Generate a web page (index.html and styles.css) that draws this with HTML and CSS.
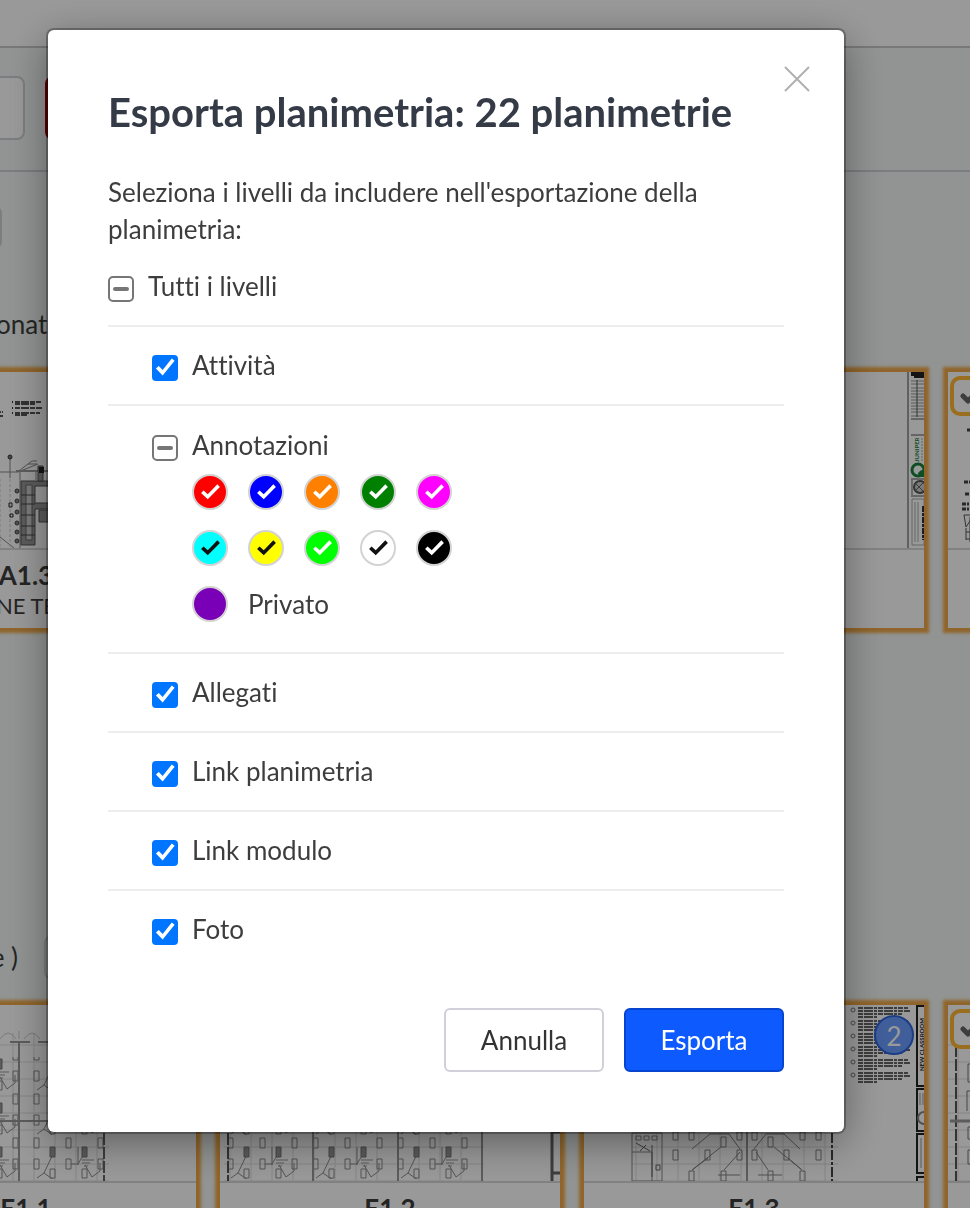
FILE: index.html
```html
<!DOCTYPE html>
<html lang="it">
<head>
<meta charset="utf-8">
<meta name="viewport" content="width=device-width, initial-scale=1">
<title>Esporta planimetria</title>
<link rel="stylesheet" href="styles.css">
</head>
<body>
<svg class="defs" width="0" height="0" aria-hidden="true">
  <defs>
    <pattern id="grid" width="21" height="17" patternUnits="userSpaceOnUse">
      <path d="M0 6H21M10 0V17" stroke="#dedede" stroke-width="1" fill="none"/>
    </pattern>
    <pattern id="lights" x="4" y="86" width="85" height="44" patternUnits="userSpaceOnUse">
      <g fill="none" stroke="#8c8c8c" stroke-width="1">
        <path d="M4 3h5v10h-5zM36 3h5v10h-5zM68 3h5v10h-5zM4 24h5v10h-5zM20 34h5v9h-5zM36 24h5v10h-5zM52 34h5v9h-5zM68 24h5v10h-5z"/>
        <path d="M7 43L14 38L24 17H20M14 38L28 48M41 29H48L57 14M55 30L62 42L70 36V28M48 12V30"/>
      </g>
      <path d="M20 12h5v10h-5zM52 12h5v10h-5z" fill="#999" stroke="#777"/>
      <path d="M52 25h12M52 28h8M54 31h4" stroke="#999"/>
    </pattern>
    <pattern id="notes" x="266" y="2" width="62" height="13" patternUnits="userSpaceOnUse">
      <circle cx="3" cy="3" r="2" fill="none" stroke="#777"/>
      <path d="M8 1H58M8 4H60M8 7H52M8 10H28" stroke="#666" stroke-width="2" stroke-dasharray="5 1 9 1 3 1"/>
    </pattern>
    <symbol id="tick" viewBox="0 0 20 16">
      <path d="M3 8L8 13L18 3" fill="none" stroke="#666" stroke-width="5" stroke-linecap="round" stroke-linejoin="round"/>
    </symbol>
  </defs>
</svg>

<div class="page">
  <header class="topbar"></header>
  <div class="toolbar">
    <input class="search" type="text" aria-label="Cerca">
    <button class="danger" type="button" aria-label="Elimina"></button>
  </div>
  <main class="plans">
    <div class="filters"><span class="filter"></span></div>
    <div class="group-head"><span class="group-name">onato</span></div>
    <div class="cards">
      <article class="card selected">
        <svg class="thumb" viewBox="0 0 340 176">
          <g stroke="#555" stroke-width="2" stroke-dasharray="5 1 8 1">
            <path d="M159 30H185M159 32H180M159 36H186M159 41H184M159 43H171"/>
            <path d="M140 40H147M142 44H148"/>
          </g>
          <path d="M156 30h1M156 36h1M156 41h1" stroke="#333" stroke-width="2"/>
          <path d="M144 100H162L182 92M154 85V106M164 98l12-9h5M172 92h9M144 165L158 176M164 100V176M180 100V108" fill="none" stroke="#888"/>
          <path d="M144 107V176M154 107V176" stroke="#ccc" stroke-dasharray="3 2"/>
          <circle cx="154" cy="85" r="2" fill="#777" stroke="#333"/>
          <path d="M160 98H194V100H160z" fill="#999"/>
          <path d="M165 109H193V114H179V131H194V137H179V173H165z" fill="#999" stroke="#555"/>
          <path d="M170 113h6v55h-6z" fill="#ccc" stroke="#666"/>
          <path d="M165 123h14M165 132h14M165 143h14M165 154h14M165 163h14" stroke="#444"/>
          <g fill="#888" stroke="#444"><circle cx="161" cy="119" r="2"/><circle cx="161" cy="129" r="2"/><circle cx="161" cy="140" r="2"/><circle cx="161" cy="151" r="2"/><circle cx="161" cy="160" r="2"/><circle cx="161" cy="169" r="2"/></g>
          <path d="M182 94h5v15h-5zM183 138h10v12h-10z" fill="#999" stroke="#555"/>
          <path d="M183 95h5v6h-5z" fill="#222"/>
          <path d="M153 131h3v4h-3zM154 142h3v3h-3z" fill="none" stroke="#222"/>
        </svg>
        <h2 class="code">A1.3</h2>
        <p class="name">NE TE</p>
      </article>
      <article class="card selected">
        <svg class="thumb" viewBox="0 0 340 176"></svg>
      </article>
      <article class="card selected">
        <svg class="thumb" viewBox="0 0 340 176">
          <path d="M324 0V176" stroke="#444"/>
          <path d="M327 1h13v2h-13M330 5h10" stroke="#222" stroke-width="2" fill="none"/>
          <path d="M327 9H340M327 12H340M327 16H340M327 19H340M327 22H340M327 25H340M327 28H340M327 31H340M327 34H340M327 37H340M327 40H340M327 44H340" stroke="#999" stroke-width="1"/>
          <path d="M333 8V45M327 47H340M327 63H340M327 107H340M327 124H340" stroke="#555"/>
          <text class="maker" transform="translate(335 90) rotate(-90)">JUNIPER</text>
          <path d="M338 66V90" stroke="#9aae9f" stroke-dasharray="2 1"/>
          <circle cx="334" cy="98" r="6" fill="none" stroke="#18833c" stroke-width="3"/>
          <path d="M334 101q4-5 6-2v6h-5z" fill="#18833c"/>
          <circle cx="336" cy="115" r="6" fill="#ccc" stroke="#555" stroke-width="2"/>
          <path d="M331 111l8 8M339 111l-8 8M328 108v15" stroke="#666"/>
          <path d="M328 127h12v46h-12zM331 130v40M334 130v40" fill="none" stroke="#aaa"/>
          <path d="M339 134V168" stroke="#333" stroke-width="2" stroke-dasharray="6 1 3 1"/>
        </svg>
      </article>
      <article class="card selected">
        <svg class="thumb" viewBox="0 0 340 176">
          <path d="M16 110h10M17 122h10M14 132h12M14 137h12M19 58h8" stroke="#444" stroke-width="3" stroke-dasharray="4 1 2 1"/>
          <path d="M16 143h10l-8 12zM18 156v12M22 145v25M18 160h8M18 167h8" fill="none" stroke="#555"/>
        </svg>
        <span class="mark"><svg class="mark-icon"><use href="#tick"/></svg></span>
      </article>
    </div>

    <div class="group-head second"><span class="group-name count">e )</span><span class="group-tool"></span></div>
    <div class="cards">
      <article class="card selected">
        <svg class="thumb" viewBox="0 0 340 176">
          <path d="M0 28H253V176H0z" fill="url(#grid)"/>
          <path d="M0 52H250V176H0z" fill="url(#lights)"/>
          <path d="M163 36V176M0 116H250M154 37h20M182 37h20" stroke="#999" stroke-width="2"/>
          <path d="M144 34q8-12 16 0M168 34q8-12 16 0M163 26v8" stroke="#ccc" fill="none"/>
          <path d="M248 30V176" stroke="#666" stroke-width="2" stroke-dasharray="12 2"/>
        </svg>
        <h2 class="code">E1.1</h2>
      </article>
      <article class="card selected">
        <svg class="thumb" viewBox="0 0 340 176">
          <path d="M4 28H264V176H4z" fill="url(#grid)"/>
          <path d="M8 52H262V176H8z" fill="url(#lights)"/>
          <path d="M93 36V176M178 36V176M262 36V176" stroke="#999" stroke-width="2"/>
          <path d="M8 30V176" stroke="#555" stroke-width="2" stroke-dasharray="12 2"/>
          <path d="M332 0V176M332 127h8M332 168h8" stroke="#666" stroke-width="3"/>
        </svg>
        <h2 class="code">E1.2</h2>
      </article>
      <article class="card selected">
        <svg class="thumb" viewBox="0 0 340 176">
          <path d="M48 60H254V176H48z" fill="url(#grid)"/>
          <path d="M48 128H78V176H48zM48 147h20v29M52 131h5v4h-5zM60 131h5v4h-5zM68 131h5v4h-5z" fill="none" stroke="#888"/>
          <path d="M52 138l14 8M56 146l6-6M68 140v32M72 160h4v5h-4z" stroke="#666" fill="none"/>
          <path d="M163 60V176" stroke="#999" stroke-width="2"/>
          <g fill="none" stroke="#858585">
            <path d="M89 127h5v8h-5zM105 127h5v8h-5zM137 132h5v10h-5zM153 127h5v8h-5zM168 127h5v8h-5zM184 132h5v10h-5zM216 127h5v8h-5zM232 127h5v8h-5z"/>
            <path d="M89 145h5v10h-5zM121 145h5v10h-5zM153 145h5v10h-5zM168 145h5v10h-5zM200 145h5v10h-5zM232 145h5v10h-5zM105 166h5v10h-5zM137 166h5v10h-5zM184 166h5v10h-5zM216 166h5v10h-5z"/>
            <path d="M108 144L120 134L126 129H145L156 144M108 165L124 153M137 142L108 165M140 165l16-18M134 170h22M170 144L182 129H200L216 144M172 147l12 18M190 142L218 165M204 153l14 12M174 170h24"/>
          </g>
          <path d="M248 60V176" stroke="#444" stroke-width="2" stroke-dasharray="10 2 3 2"/>
          <path d="M266 2H328V80H266z" fill="url(#notes)"/>
          <path d="M340 1H333V81H340M340 84H333V126H340M340 129H333V168H340M340 172H333V176" fill="none" stroke="#222" stroke-width="2"/>
          <text class="sheet-title" transform="translate(340 66) rotate(-90)">NEW CLASSROOM</text>
          <circle cx="340" cy="113" r="6" fill="none" stroke="#888" stroke-width="2"/>
          <path d="M336 88v12M339 88v12M337 133v30" stroke="#999"/>
        </svg>
        <span class="badge">2</span>
        <h2 class="code">E1.3</h2>
      </article>
      <article class="card selected">
        <svg class="thumb" viewBox="0 0 340 176">
          <path d="M0 36H340V176H0z" fill="url(#grid)"/>
          <path d="M8 40V176" stroke="#555" stroke-width="2" stroke-dasharray="12 2"/>
          <path d="M2 116H340" stroke="#999" stroke-width="3"/>
          <path d="M26 59h-6v18h6M26 122h-6v12h6M26 145h-6v14h6M26 86h-7v20" fill="none" stroke="#777"/>
        </svg>
        <span class="mark"><svg class="mark-icon"><use href="#tick"/></svg></span>
      </article>
    </div>
  </main>
</div>

<div class="overlay">
  <form class="modal" role="dialog" aria-modal="true" aria-labelledby="modal-title">
    <button class="close" type="button" aria-label="Chiudi">
      <svg class="close-icon" viewBox="0 0 26 26"><path d="M1 1L25 25M25 1L1 25" fill="none" stroke="#b0b0b0" stroke-width="2"/></svg>
    </button>
    <h1 class="title" id="modal-title">Esporta planimetria: 22 planimetrie</h1>
    <p class="intro">Seleziona i livelli da includere nell'esportazione della planimetria:</p>

    <label class="row"><input class="box mixed" type="checkbox" aria-checked="mixed">Tutti i livelli</label>
    <div class="levels">
      <label class="row level"><input class="box" type="checkbox" checked>Attività</label>
      <div class="level notes">
        <label class="notes-label"><input class="box mixed" type="checkbox" aria-checked="mixed">Annotazioni</label>
        <div class="swatches">
          <input class="swatch red" type="checkbox" aria-label="Rosso" checked>
          <input class="swatch blue" type="checkbox" aria-label="Blu" checked>
          <input class="swatch orange" type="checkbox" aria-label="Arancione" checked>
          <input class="swatch green" type="checkbox" aria-label="Verde" checked>
          <input class="swatch magenta" type="checkbox" aria-label="Magenta" checked>
          <input class="swatch cyan dark-tick" type="checkbox" aria-label="Ciano" checked>
          <input class="swatch yellow dark-tick" type="checkbox" aria-label="Giallo" checked>
          <input class="swatch lime" type="checkbox" aria-label="Verde chiaro" checked>
          <input class="swatch white dark-tick" type="checkbox" aria-label="Bianco" checked>
          <input class="swatch black" type="checkbox" aria-label="Nero" checked>
          <label class="private"><input class="swatch purple" type="checkbox">Privato</label>
        </div>
      </div>
      <label class="row level"><input class="box" type="checkbox" checked>Allegati</label>
      <label class="row level"><input class="box" type="checkbox" checked>Link planimetria</label>
      <label class="row level"><input class="box" type="checkbox" checked>Link modulo</label>
      <label class="row level"><input class="box" type="checkbox" checked>Foto</label>
    </div>

    <div class="actions">
      <button class="btn" type="button">Annulla</button>
      <button class="btn primary" type="submit">Esporta</button>
    </div>
  </form>
</div>
</body>
</html>
```
FILE: styles.css
```css
* { box-sizing: border-box; }

body {
  margin: 0;
  height: 100vh;
  overflow: hidden;
  background: #f2f7f4;
  color: #3d3d3d;
  font: 26px/37px Lato, "Open Sans", sans-serif;
  font-variant-ligatures: none;
}

h1, h2, p { margin: 0; }
button, input { font: inherit; font-variant-ligatures: none; margin: 0; }
.defs { display: block; }

/* Plans list behind the dialog */
.page { height: 100vh; overflow: hidden; }

.topbar {
  height: 48px;
  background: #fff;
  border-bottom: 2px solid #c6c8c8;
}

.toolbar {
  display: flex;
  gap: 20px;
  padding: 28px 0 30px;
  margin-left: -144px;
  border-bottom: 2px solid #ced0d6;
}

.search {
  width: 169px;
  height: 64px;
  background: #fff;
  border: 2px solid #ced0d6;
  border-radius: 8px;
}

.danger {
  width: 160px;
  height: 64px;
  background: #b80000;
  border: 2px solid #a00000;
  border-radius: 8px;
}

.plans { padding-top: 35px; margin-left: -144px; }

.filter {
  display: block;
  width: 146px;
  height: 41px;
  background: #ced0d6;
  border-radius: 6px;
}

.group-head {
  display: flex;
  align-items: center;
  gap: 26px;
  height: 45px;
  margin: 54px 0 25px;
}

.group-head.second { margin-top: 307px; }
.group-name { padding-left: 140px; }
.count { width: 162px; padding-left: 0; text-align: right; }

.group-tool {
  width: 120px;
  height: 45px;
  border: 2px solid #ced0d6;
  border-radius: 8px;
}

.cards {
  display: grid;
  grid-template-columns: repeat(4, 340px);
  gap: 24px;
}

.card {
  position: relative;
  height: 256px;
  background: #fff;
  text-align: center;
  color: #3d3d3d;
}

.card.selected { box-shadow: 0 0 3px 5px #f0a848; }

.thumb {
  display: block;
  width: 100%;
  height: 178px;
  border-bottom: 2px solid #d8d8d8;
}

.code { padding-top: 8px; font-size: 26px; line-height: 34px; }
.name { font-size: 22px; line-height: 28px; }

.maker { font: bold 6px Lato, sans-serif; fill: #18833c; }
.sheet-title { font: bold 6px Lato, sans-serif; fill: #222; }

.mark {
  position: absolute;
  top: 4px;
  left: 2px;
  display: grid;
  place-items: center;
  width: 40px;
  height: 40px;
  background: #fff;
  border: 4px solid #ffb733;
  border-radius: 10px;
}

.mark-icon { width: 20px; height: 16px; }

.badge {
  position: absolute;
  top: 10px;
  right: 10px;
  width: 40px;
  height: 40px;
  border: 2px solid #2f66e0;
  border-radius: 50%;
  background: #6c9dff;
  color: #fff;
  line-height: 38px;
}

/* Dialog */
.overlay {
  position: fixed;
  inset: 0;
  padding: 30px 48px;
  background: rgba(0, 0, 0, 0.4);
}

.modal {
  position: relative;
  max-width: 796px;
  padding: 60px;
  background: #fff;
  border-radius: 6px;
  box-shadow: 0 0 0 2px rgba(0, 0, 0, 0.28), 0 10px 40px rgba(0, 0, 0, 0.4);
}

.close {
  position: absolute;
  top: 36px;
  right: 34px;
  padding: 0;
  border: 0;
  background: none;
}

.close-icon { display: block; width: 26px; height: 26px; }

.title { color: #343a46; font-size: 40px; line-height: 44px; }
.intro { margin-top: 40px; }

.row, .notes-label { display: flex; align-items: center; gap: 14px; }
.row { padding: 20px 0; }
.level { padding-left: 44px; border-top: 2px solid #ededed; }

.box {
  appearance: none;
  flex: none;
  width: 26px;
  height: 26px;
  margin-top: 4px;
  border: 2px solid #767676;
  border-radius: 5px;
  background: #fff;
  display: grid;
  place-items: center;
}

.box:checked { border: 0; border-radius: 4px; background: #0075ff; }

.box:checked::before {
  content: "";
  width: 26px;
  height: 26px;
  background: #fff;
  clip-path: polygon(15% 54%, 26% 44%, 41% 60%, 76% 15%, 87% 24%, 41% 81%);
}

.box.mixed::before {
  content: "";
  width: 16px;
  height: 4px;
  border-radius: 2px;
  background: #767676;
}

.notes { padding-top: 21px; padding-bottom: 30px; }

.swatches {
  display: grid;
  grid-template-columns: repeat(5, 36px);
  gap: 20px;
  padding: 10px 0 0 40px;
}

.private {
  grid-column: 1 / -1;
  display: flex;
  align-items: center;
  gap: 20px;
  height: 36px;
}

.swatch {
  appearance: none;
  flex: none;
  width: 36px;
  height: 36px;
  border: 2px solid #d3d3d3;
  border-radius: 50%;
}

.swatch:checked::before {
  content: "";
  display: block;
  width: 32px;
  height: 32px;
  background: #fff;
  clip-path: polygon(22% 53%, 30% 45%, 43% 57%, 73% 26%, 81% 34%, 43% 73%);
}

.dark-tick:checked::before { background: #111; }

.red { background: #f00; }
.blue { background: #00f; }
.orange { background: #ff8000; }
.green { background: #008000; }
.magenta { background: #f0f; }
.cyan { background: #0ff; }
.yellow { background: #ff0; }
.lime { background: #0f0; }
.white { background: #fff; }
.black { background: #000; }
.purple { background: #7a00b8; }

.actions {
  display: flex;
  justify-content: flex-end;
  gap: 20px;
  margin-top: 40px;
}

.btn {
  min-width: 160px;
  height: 64px;
  border: 2px solid #d0d0d8;
  border-radius: 6px;
  background: #fff;
  color: #333;
}

.primary { border-color: #0545d0; background: #0d5aff; color: #fff; }
```
